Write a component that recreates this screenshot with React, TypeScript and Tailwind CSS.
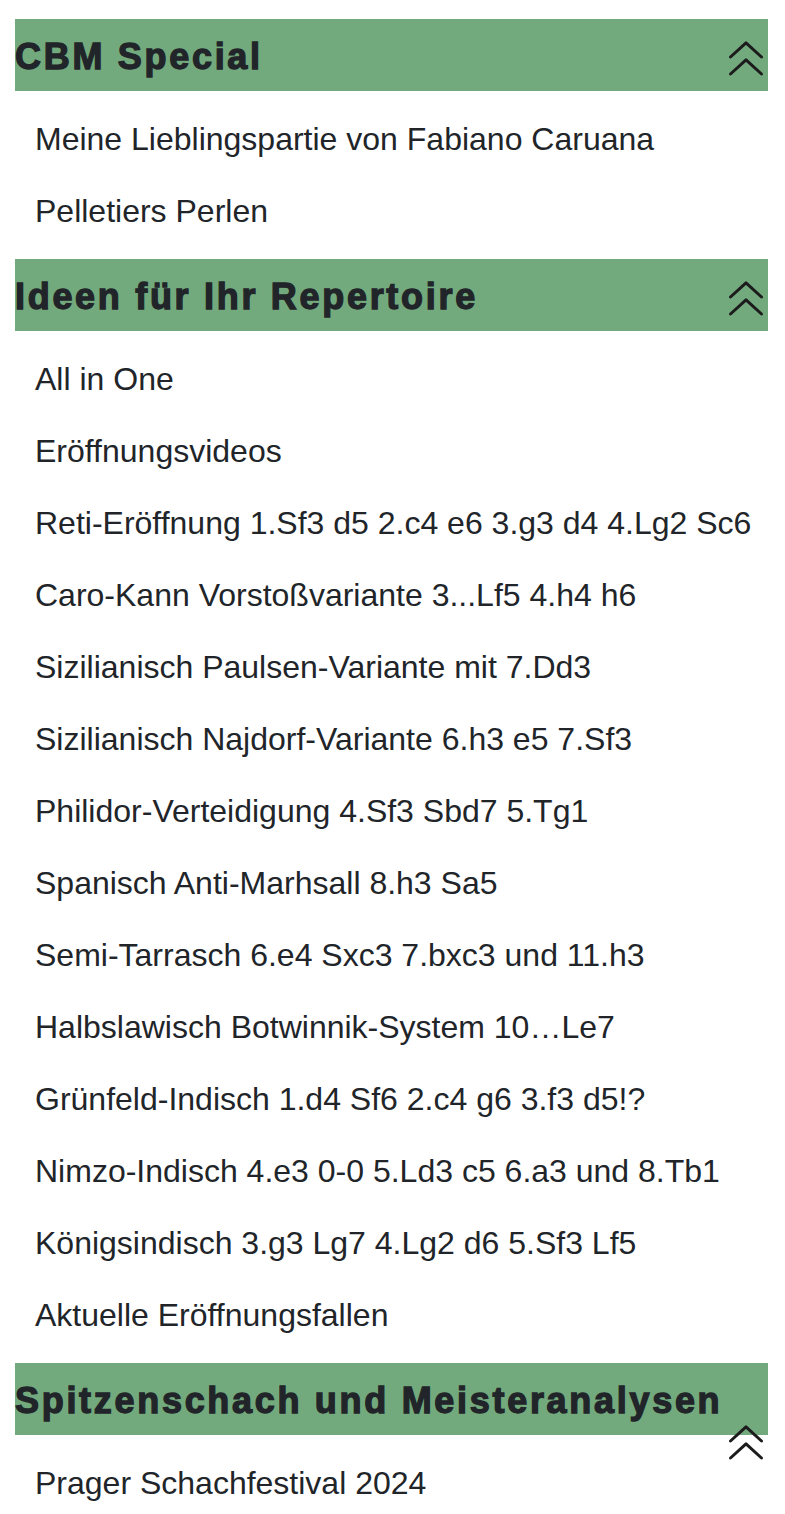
const sections = [
  {
    title: 'CBM Special',
    iconLow: false,
    items: ['Meine Lieblingspartie von Fabiano Caruana', 'Pelletiers Perlen']
  },
  {
    title: 'Ideen für Ihr Repertoire',
    iconLow: false,
    items: [
      'All in One',
      'Eröffnungsvideos',
      'Reti-Eröffnung 1.Sf3 d5 2.c4 e6 3.g3 d4 4.Lg2 Sc6',
      'Caro-Kann Vorstoßvariante 3...Lf5 4.h4 h6',
      'Sizilianisch Paulsen-Variante mit 7.Dd3',
      'Sizilianisch Najdorf-Variante 6.h3 e5 7.Sf3',
      'Philidor-Verteidigung 4.Sf3 Sbd7 5.Tg1',
      'Spanisch Anti-Marhsall 8.h3 Sa5',
      'Semi-Tarrasch 6.e4 Sxc3 7.bxc3 und 11.h3',
      'Halbslawisch Botwinnik-System 10…Le7',
      'Grünfeld-Indisch 1.d4 Sf6 2.c4 g6 3.f3 d5!?',
      'Nimzo-Indisch 4.e3 0-0 5.Ld3 c5 6.a3 und 8.Tb1',
      'Königsindisch 3.g3 Lg7 4.Lg2 d6 5.Sf3 Lf5',
      'Aktuelle Eröffnungsfallen'
    ]
  },
  {
    title: 'Spitzenschach und Meisteranalysen',
    iconLow: true,
    items: ['Prager Schachfestival 2024']
  }
]

function ChevronsUp() {
  return (
    <svg width="36" height="36" viewBox="0 0 36 36" fill="none" stroke="#1c1c1c" strokeWidth="3" strokeLinecap="round" strokeLinejoin="round">
      <path d="M2.5 16 L18 1.8 L33.5 16" />
      <path d="M2.5 33 L18 18.8 L33.5 33" />
    </svg>
  )
}

export default function App() {
  return (
    <div className="bg-white pt-[19px] pl-[15px] pr-[17px] pb-6 font-['Liberation_Sans',Arial,sans-serif] text-[#212529]">
      {sections.map((section, key) => (
        <section key={key}>
          <div className="relative h-[72px] bg-[#73aa7d]">
            <h2 className="text-[36px] leading-[76px] font-bold tracking-[2.7px] whitespace-nowrap [-webkit-text-stroke:1.3px_#212529]">
              {section.title}
            </h2>
            <div className={section.iconLow ? 'absolute right-[4px] top-[62px]' : 'absolute right-[4px] top-[22px]'}>
              <ChevronsUp />
            </div>
          </div>
          <ul className="py-3">
            {section.items.map((item, i) => (
              <li key={i} className="pl-5 h-[72px] flex items-center text-[32px] leading-[48px]">
                <a href="#">{item}</a>
              </li>
            ))}
          </ul>
        </section>
      ))}
    </div>
  )
}
